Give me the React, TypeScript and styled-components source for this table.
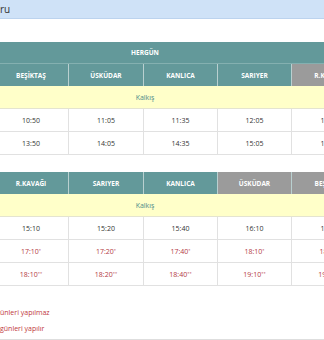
import React from "react";
import styled, { createGlobalStyle } from "styled-components";

const GlobalStyle = createGlobalStyle`
  html, body { margin: 0; padding: 0; background: #fff; overflow: hidden; }
  body { font-family: "Open Sans", "Noto Sans", Arial, sans-serif; }
`;

const Page = styled.div`
  width: 324px;
  height: 340px;
  overflow: hidden;
  display: flex;
  flex-direction: column;
`;

const TopBar = styled.div`
  height: 19px;
  background: #cfe2f7;
  border-bottom: 1px solid #bcd3ee;
  font-size: 10px;
  line-height: 18px;
  color: #333;
  padding-left: 0;
`;

const Schedule = styled.div<{ $top: number }>`
  margin-top: ${(p) => p.$top}px;
  margin-left: -6px;
  width: 373px;
  display: flex;
  flex-direction: column;
`;

const TitleRow = styled.div`
  height: 21px;
  background: #63999a;
  display: flex;
  align-items: center;
  border-bottom: 1px solid #84b0b0;
`;

const Centered = styled.span`
  width: 302px;
  text-align: center;
`;

const TitleText = styled(Centered)`
  color: #fff;
  font-size: 6.5px;
  font-weight: 700;
`;

const Grid = styled.div`
  display: grid;
  grid-template-columns: 74px 75px 74px 74px 76px;
`;

const HeadCell = styled.div<{ $gray?: boolean }>`
  height: 22px;
  background: ${(p) => (p.$gray ? "#9b9b9b" : "#63999a")};
  color: #fff;
  font-size: 6.5px;
  font-weight: 700;
  display: flex;
  align-items: center;
  justify-content: center;
  border-left: 1px solid #b9d0d0;
  &:first-child { border-left: none; }
`;

const KalkisRow = styled.div`
  height: 22px;
  background: #ffffc9;
  display: flex;
  align-items: center;
  border-bottom: 1px solid #e4e4d0;
`;

const KalkisText = styled(Centered)`
  color: #4d8a8a;
  font-size: 7px;
`;

const DataCell = styled.div<{ $red?: boolean }>`
  height: 22px;
  border-bottom: 1px solid #e1e1e1;
  border-left: 1px solid #e1e1e1;
  display: flex;
  align-items: center;
  justify-content: center;
  font-size: 7px;
  color: ${(p) => (p.$red ? "#b3393f" : "#333")};
  &:first-child { border-left: none; }
`;

const Sup = styled.sup`
  font-size: 4px;
  line-height: 0;
  vertical-align: 3px;
`;

const Notes = styled.div`
  margin-top: 21px;
  padding-bottom: 5px;
  border-bottom: 1px solid #dedede;
  display: flex;
  flex-direction: column;
  gap: 5px;
`;

const Note = styled.div`
  font-size: 7px;
  line-height: 11px;
  color: #c0383c;
`;

type Col = { name: string; gray?: boolean };

const Table = ({
  top,
  title,
  cols,
  rows,
}: {
  top: number;
  title?: string;
  cols: Col[];
  rows: { red?: boolean; mark?: string; times: string[] }[];
}) => (
  <Schedule $top={top}>
    {title && (
      <TitleRow>
        <TitleText>{title}</TitleText>
      </TitleRow>
    )}
    <Grid>
      {cols.map((c) => (
        <HeadCell key={c.name} $gray={c.gray}>
          {c.name}
        </HeadCell>
      ))}
    </Grid>
    <KalkisRow>
      <KalkisText>Kalkış</KalkisText>
    </KalkisRow>
    {rows.map((r, i) => (
      <Grid key={i}>
        {r.times.map((t, j) => (
          <DataCell key={j} $red={r.red}>
            {t}
            {r.mark && <Sup>{r.mark}</Sup>}
          </DataCell>
        ))}
      </Grid>
    ))}
  </Schedule>
);

export default function App() {
  return (
    <>
      <GlobalStyle />
      <Page>
        <TopBar>ru</TopBar>
        <Table
          top={23}
          title="HERGÜN"
          cols={[
            { name: "BEŞİKTAŞ" },
            { name: "ÜSKÜDAR" },
            { name: "KANLICA" },
            { name: "SARIYER" },
            { name: "R.KAVAĞI", gray: true },
          ]}
          rows={[
            { times: ["10:50", "11:05", "11:35", "12:05", "12:30"] },
            { times: ["13:50", "14:05", "14:35", "15:05", "15:30"] },
          ]}
        />
        <Table
          top={17}
          cols={[
            { name: "R.KAVAĞI" },
            { name: "SARIYER" },
            { name: "KANLICA" },
            { name: "ÜSKÜDAR", gray: true },
            { name: "BEŞİKTAŞ", gray: true },
          ]}
          rows={[
            { times: ["15:10", "15:20", "15:40", "16:10", "16:25"] },
            { red: true, mark: "*", times: ["17:10", "17:20", "17:40", "18:10", "18:25"] },
            { red: true, mark: "**", times: ["18:10", "18:20", "18:40", "19:10", "19:25"] },
          ]}
        />
        <Notes>
          <Note>ünleri yapılmaz</Note>
          <Note>günleri yapılır</Note>
        </Notes>
      </Page>
    </>
  );
}
